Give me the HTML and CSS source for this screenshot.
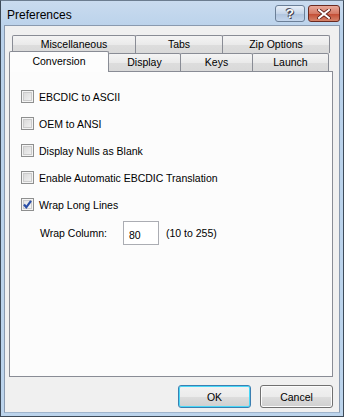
FILE: index.html
```html
<!DOCTYPE html>
<html>
<head>
<meta charset="utf-8">
<link rel="stylesheet" href="styles.css">
</head>
<body>
<div class="window">
  <div class="titlebar">
    <span class="title">Preferences</span>
    <div class="caption-btns">
      <div class="cbtn help">?</div>
      <div class="cbtn close">
        <svg width="14" height="10" viewBox="0 0 14 10"><path d="M2 1 L12 9 M12 1 L2 9" stroke="#5a1a12" stroke-width="3.6" stroke-linecap="square"/><path d="M2 1 L12 9 M12 1 L2 9" stroke="#fff" stroke-width="2" stroke-linecap="square"/></svg>
      </div>
    </div>
  </div>
  <div class="client">
    <div class="tabs">
      <div class="tabrow back">
        <div class="tab t-misc">Miscellaneous</div>
        <div class="tab t-tabs">Tabs</div>
        <div class="tab t-zip">Zip Options</div>
      </div>
      <div class="tabrow front">
        <div class="tab sel t-conv">Conversion</div>
        <div class="tab t-disp">Display</div>
        <div class="tab t-keys">Keys</div>
        <div class="tab t-launch">Launch</div>
      </div>
    </div>
    <div class="panel">
      <label class="chk"><span class="box"></span>EBCDIC to ASCII</label>
      <label class="chk"><span class="box"></span>OEM to ANSI</label>
      <label class="chk"><span class="box"></span>Display Nulls as Blank</label>
      <label class="chk"><span class="box"></span>Enable Automatic EBCDIC Translation</label>
      <label class="chk"><span class="box checked"><svg width="11" height="11" viewBox="0 0 11 11"><path d="M2 5.5 L4.3 8.3 L9 1.8" fill="none" stroke="#2a4fa8" stroke-width="2.2"/></svg></span>Wrap Long Lines</label>
      <div class="wrapcol">
        <span class="lbl">Wrap Column:</span>
        <span class="input">80</span>
        <span class="range">(10 to 255)</span>
      </div>
    </div>
    <div class="buttons">
      <div class="btn default">OK</div>
      <div class="btn">Cancel</div>
    </div>
  </div>
</div>
</body>
</html>
```
FILE: styles.css
```css
html, body {
  margin: 0;
  padding: 0;
  background: #fff;
}
.window {
  width: 344px;
  height: 417px;
  box-sizing: border-box;
  border: 1px solid #3d4a58;
  border-top-color: #6c7d90;
  background: linear-gradient(#c9dbef, #b9d1ea 30px, #bcd4ec);
  padding: 0 3px 3px 3px;
  display: flex;
  flex-direction: column;
  font-family: "Liberation Sans", Arial, sans-serif;
  font-size: 10.5px;
  color: #000;
}
.titlebar {
  height: 24px;
  flex: none;
  display: flex;
  align-items: center;
  justify-content: space-between;
}
.title {
  font-size: 12px;
  margin-left: 3px;
  margin-top: 3px;
  color: #000;
}
.caption-btns {
  display: flex;
  align-self: flex-start;
  margin-top: 4px;
  margin-right: 0;
}
.cbtn {
  height: 17px;
  box-sizing: border-box;
  border: 1px solid #6b7f97;
  border-radius: 3px;
  display: flex;
  align-items: center;
  justify-content: center;
}
.help {
  width: 30px;
  background: linear-gradient(#e8eff8, #c5d5e9 50%, #afc3dd 51%, #c4d6ec);
  color: #fff;
  font-weight: bold;
  font-size: 13px;
  text-shadow: 0 0 1px #334, 1px 1px 0 #445, -1px -1px 0 #556;
}
.close {
  width: 32px;
  margin-left: 3px;
  border-color: #6b2a20;
  background: linear-gradient(#e9a99a, #d47a66 50%, #c24a32 51%, #d5836a);
}
.client {
  flex: 1;
  background: #f0f0f0;
  border: 1px solid #8a9aaf;
  border-bottom-color: #9fb4cc;
  padding: 9px 0 0 4px;
  display: flex;
  flex-direction: column;
}
.tabs {
  height: 36px;
  width: 321px;
}
.tabrow {
  display: flex;
  height: 18px;
}
.tabrow.back {
  margin-left: 3px;
  width: 317px;
}
.tabrow.front {
  width: 320px;
  position: relative;
  z-index: 1;
}
.tab {
  box-sizing: border-box;
  border: 1px solid #898c95;
  border-bottom: none;
  border-radius: 2px 2px 0 0;
  background: linear-gradient(#f4f4f4, #eaeaea 50%, #dddddd 51%, #d9d9d9);
  display: flex;
  align-items: center;
  justify-content: center;
  margin-right: -1px;
  height: 18px;
  padding-bottom: 1px;
}
.t-misc { width: 124px; }
.t-tabs { width: 88px; }
.t-zip { width: 108px; }
.t-conv { width: 100px; }
.t-disp { width: 73px; }
.t-keys { width: 73px; }
.t-launch { width: 77px; }
.tab.sel {
  background: #fdfdfd;
  height: 21px;
  margin-top: -2px;
  padding-bottom: 3px;
  border-color: #898c95;
  position: relative;
  z-index: 2;
}
.panel {
  width: 324px;
  height: 306px;
  box-sizing: border-box;
  border: 1px solid #898c95;
  background: #fcfcfc;
  padding: 18px 0 0 11px;
  display: flex;
  flex-direction: column;
  gap: 14px;
}
.chk {
  display: flex;
  align-items: center;
  height: 13px;
}
.box {
  width: 13px;
  height: 13px;
  box-sizing: border-box;
  border: 1px solid #8e8f8f;
  background: linear-gradient(135deg, #d4d4d4, #f6f6f6);
  box-shadow: inset 0 0 0 1px #f4f4f4, inset 0 0 0 2px #cbcbcb;
  margin-right: 5px;
  display: flex;
  align-items: center;
  justify-content: center;
}
.box.checked {
  background: linear-gradient(135deg, #e0e0e0, #fafafa);
}
.wrapcol {
  display: flex;
  align-items: center;
  margin-left: 19px;
  margin-top: -4px;
}
.lbl {
  width: 83px;
}
.input {
  width: 36px;
  height: 24px;
  box-sizing: border-box;
  border: 1px solid #abadb3;
  background: #fff;
  display: flex;
  align-items: flex-end;
  padding: 0 0 3px 5px;
}
.range {
  margin-left: 7px;
}
.buttons {
  display: flex;
  justify-content: flex-end;
  gap: 9px;
  padding: 8px 6px 0 0;
}
.btn {
  width: 73px;
  height: 23px;
  box-sizing: border-box;
  border: 1px solid #707070;
  border-radius: 3px;
  background: linear-gradient(#f2f2f2, #ebebeb 50%, #dddddd 51%, #cfcfcf);
  box-shadow: inset 0 0 0 1px #fcfcfc;
  display: flex;
  align-items: center;
  justify-content: center;
}
.btn.default {
  border-color: #3c7fb1;
  box-shadow: inset 0 0 0 1px #48d8f8;
}
```
